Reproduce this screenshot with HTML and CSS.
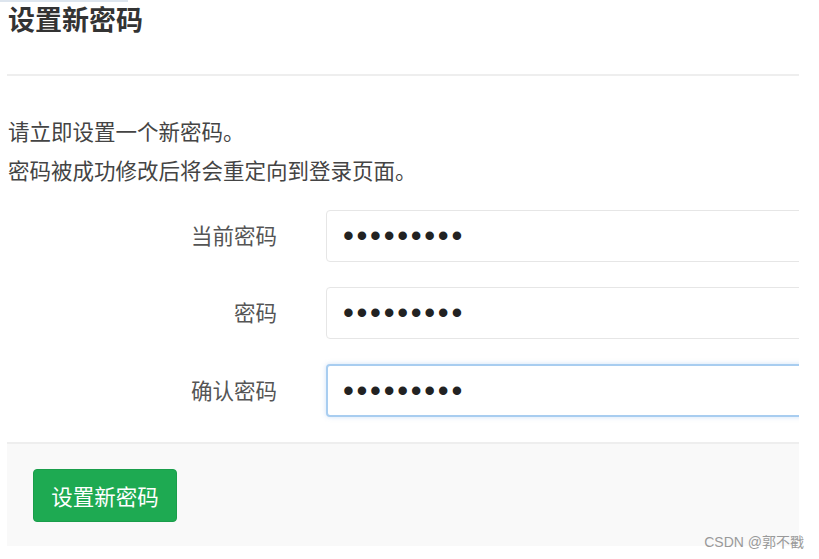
FILE: index.html
```html
<!DOCTYPE html>
<html lang="zh-CN">
<head>
<meta charset="utf-8">
<title>设置新密码</title>
<link rel="stylesheet" href="styles.css">
</head>
<body>
<div class="topstrip"></div>
<div class="page">
  <h1 class="title">设置新密码</h1>
  <hr class="divider">
  <div class="intro">
    <p>请立即设置一个新密码。</p>
    <p>密码被成功修改后将会重定向到登录页面。</p>
  </div>
  <form class="form">
    <div class="row">
      <label class="label" for="cur">当前密码</label>
      <input class="input" id="cur" type="password" value="123456789">
    </div>
    <div class="row">
      <label class="label" for="pw">密码</label>
      <input class="input" id="pw" type="password" value="123456789">
    </div>
    <div class="row">
      <label class="label" for="pw2">确认密码</label>
      <input class="input focus" id="pw2" type="password" value="123456789">
    </div>
    <div class="footer">
      <button class="btn" type="button">设置新密码</button>
    </div>
  </form>
</div>
<div class="watermark">CSDN @郭不戳</div>
</body>
</html>
```
FILE: styles.css
```css
html, body {
  margin: 0;
  padding: 0;
  background: #fff;
  width: 819px;
  height: 559px;
  overflow: hidden;
  font-family: "Noto Sans CJK SC", "Noto Sans", sans-serif;
}
body { position: relative; }
.topstrip {
  position: absolute;
  left: 0;
  top: 0;
  width: 128px;
  height: 2px;
  background: #dde5ee;
}
.page {
  margin-left: 7px;
  width: 792px;
  overflow: hidden;
}
.title {
  margin: 0 0 0 1px;
  padding-top: 1px;
  font-size: 27px;
  line-height: 36px;
  font-weight: 700;
  color: #333;
}
.divider {
  margin: 37px 0 0 0;
  border: 0;
  border-top: 2px solid #eee;
  height: 0;
}
.intro {
  margin: 35px 0 0 1px;
  color: #444;
  font-size: 21.5px;
  line-height: 39px;
}
.intro p { margin: 0; }
.form {
  margin-top: 21px;
}
.row {
  display: flex;
  align-items: center;
  margin-bottom: 25px;
}
.label {
  width: 319px;
  flex: none;
  text-align: right;
  color: #555;
  font-size: 21.5px;
  padding-right: 49px;
  padding-bottom: 3px;
  box-sizing: border-box;
}
.input {
  width: 500px;
  height: 52px;
  box-sizing: border-box;
  border: 1px solid #e6e6e6;
  border-radius: 4px;
  padding: 0 0 0 16px;
  font-family: "Liberation Sans", sans-serif;
  font-size: 31px;
  letter-spacing: 2.7px;
  color: #222;
  outline: none;
  background: #fff;
  flex: none;
}
.input.focus {
  height: 53px;
  border: 2px solid #a8cdf0;
  padding-left: 15px;
  box-shadow: 0 0 5px rgba(120, 170, 230, 0.35);
}
.footer {
  margin-top: 0;
  border-top: 2px solid #eee;
  background: #f9f9f9;
  padding: 25px 0 24px 26px;
}
.btn {
  display: block;
  width: 144px;
  height: 53px;
  background: #1eaa52;
  border: 1px solid #1a9e4b;
  border-radius: 4px;
  color: #fff;
  font-family: "Noto Sans CJK SC", "Noto Sans", sans-serif;
  font-size: 21.5px;
  padding: 0;
}
.watermark {
  position: absolute;
  right: 15px;
  bottom: 8px;
  font-size: 14px;
  color: #999;
  font-family: "Liberation Sans", "Noto Sans CJK SC", sans-serif;
}
```
